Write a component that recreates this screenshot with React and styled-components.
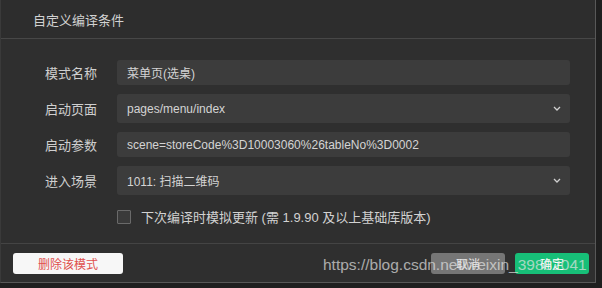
import styled, { createGlobalStyle } from "styled-components";

const GlobalStyle = createGlobalStyle`
  html, body {
    margin: 0;
    padding: 0;
    background: #1f1f1f;
  }
  body {
    font-family: "Liberation Sans", "Noto Sans CJK SC", sans-serif;
  }
`;

const Dialog = styled.div`
  position: relative;
  width: 596px;
  height: 283px;
  background: #2f2f2f;
  border-right: 1px solid #585858;
  border-bottom: 1px solid #585858;
  border-left: 1px solid #3a3a3a;
  box-sizing: border-box;
  display: flex;
  flex-direction: column;
`;

const Header = styled.div`
  height: 39px;
  box-sizing: border-box;
  padding-left: 32px;
  display: flex;
  align-items: center;
  font-size: 13px;
  color: #d2d2d2;
  background: #2d2d2d;
  border-bottom: 1px solid #474747;
`;

const Body = styled.div`
  padding: 21px 0 0 44px;
  display: flex;
  flex-direction: column;
  gap: 9px;
  flex: 1;
`;

const Row = styled.div`
  display: grid;
  grid-template-columns: 52px 453px;
  column-gap: 20px;
  align-items: center;
`;

const Label = styled.div`
  font-size: 13px;
  color: #cfcfcf;
  text-align: right;
`;

const Field = styled.div`
  height: ${(p) => (p.$select ? 29 : 25)}px;
  box-sizing: border-box;
  background: #3c3c3c;
  border-radius: 3px;
  padding: 0 9px 0 10px;
  display: flex;
  align-items: center;
  justify-content: space-between;
  font-size: 12px;
  color: #d4d4d4;
  white-space: nowrap;
`;

const Chevron = styled.svg`
  width: 8px;
  height: 5px;
  flex: none;
`;

const CheckRow = styled.label`
  margin: 3px 0 0 72px;
  display: flex;
  align-items: center;
  gap: 10px;
  font-size: 13px;
  color: #d2d2d2;
`;

const Box = styled.span`
  width: 12px;
  height: 12px;
  border: 1px solid #6a6a6a;
  background: #3a3a3a;
  border-radius: 1px;
`;

const Footer = styled.div`
  height: 39px;
  box-sizing: border-box;
  border-top: 1px solid #444;
  padding: 9px 6px 0 12px;
  display: flex;
  align-items: flex-start;
`;

const Button = styled.button`
  height: 21px;
  width: ${(p) => p.$w || 74}px;
  border: none;
  border-radius: 3px;
  font-family: inherit;
  font-size: 12px;
  padding: 0;
  cursor: pointer;
  background: ${(p) => p.$bg};
  color: ${(p) => p.$fg};
`;

const Spacer = styled.div`
  flex: 1;
`;

const Actions = styled.div`
  display: flex;
  gap: 10px;
`;

const Watermark = styled.div`
  position: absolute;
  left: 322px;
  top: 256px;
  font-size: 15.5px;
  color: rgba(228, 228, 228, 0.7);
  white-space: nowrap;
  pointer-events: none;
`;

const ChevronDown = () => (
  <Chevron viewBox="0 0 8 5">
    <path d="M1 1l3 3 3-3" fill="none" stroke="#d0d0d0" strokeWidth="1.3" />
  </Chevron>
);

export default function App() {
  return (
    <>
      <GlobalStyle />
      <Dialog>
        <Header>自定义编译条件</Header>
        <Body>
          <Row>
            <Label>模式名称</Label>
            <Field>菜单页(选桌)</Field>
          </Row>
          <Row>
            <Label>启动页面</Label>
            <Field $select>
              pages/menu/index
              <ChevronDown />
            </Field>
          </Row>
          <Row>
            <Label>启动参数</Label>
            <Field>scene=storeCode%3D10003060%26tableNo%3D0002</Field>
          </Row>
          <Row>
            <Label>进入场景</Label>
            <Field $select>
              1011: 扫描二维码
              <ChevronDown />
            </Field>
          </Row>
          <CheckRow>
            <Box />
            下次编译时模拟更新 (需 1.9.90 及以上基础库版本)
          </CheckRow>
        </Body>
        <Footer>
          <Button $w={110} $bg="#f7f7f7" $fg="#e0504d">
            删除该模式
          </Button>
          <Spacer />
          <Actions>
            <Button $bg="#767676" $fg="#e6e6e6">
              取消
            </Button>
            <Button $bg="#17bf78" $fg="#ffffff">
              确定
            </Button>
          </Actions>
        </Footer>
        <Watermark>https://blog.csdn.net/weixin_39882041</Watermark>
      </Dialog>
    </>
  );
}
